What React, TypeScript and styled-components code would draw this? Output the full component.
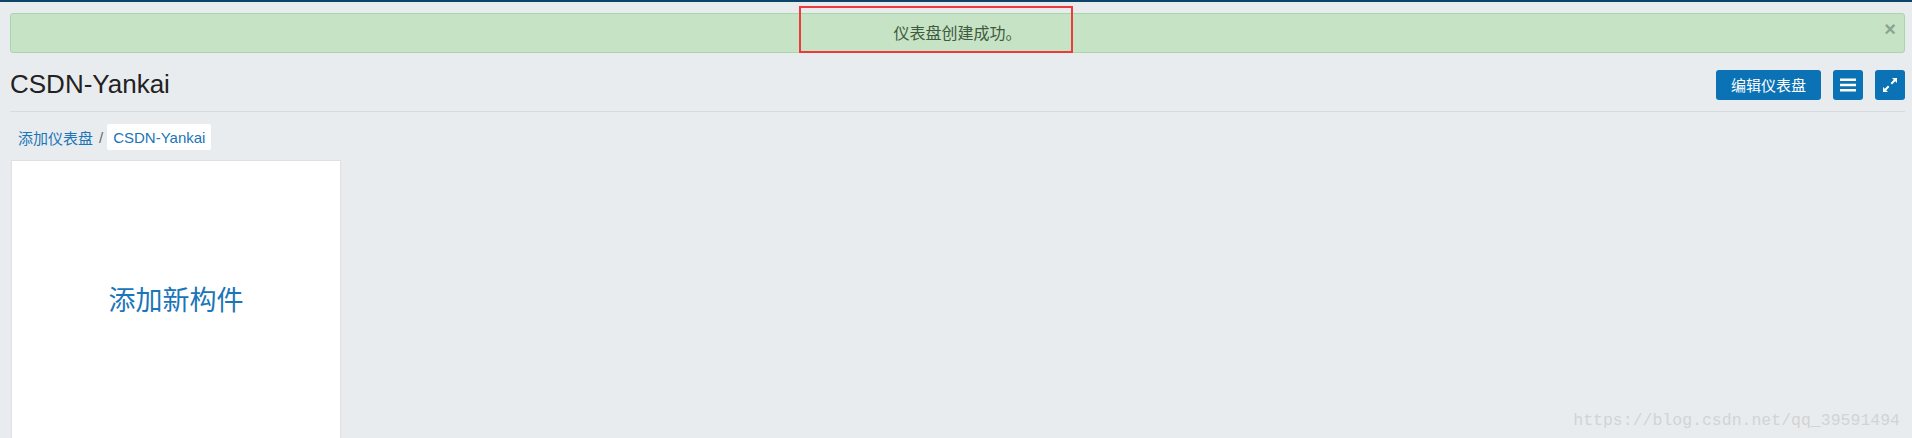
import styled, { createGlobalStyle } from "styled-components";

const Global = createGlobalStyle`
  html, body {
    margin: 0;
    padding: 0;
    background: #e9ecef;
    font-family: "Liberation Sans", "Noto Sans CJK SC", sans-serif;
  }
`;

const TopLine = styled.div`
  height: 2px;
  background: #0d4468;
`;

const Page = styled.div`
  position: relative;
  padding: 0 7px 0 10px;
  height: 436px;
  overflow: hidden;
`;

const Alert = styled.div`
  position: relative;
  margin-top: 11px;
  height: 40px;
  padding-bottom: 2px;
  box-sizing: border-box;
  border: 1px solid #a9d6a9;
  border-radius: 3px;
  background: #c6e3c6;
  display: flex;
  align-items: center;
  justify-content: center;
  color: #3f5a3c;
  font-size: 16px;
`;

const Highlight = styled.span`
  position: absolute;
  left: 788px;
  top: -8px;
  width: 270px;
  height: 43px;
  border: 2px solid #ee3a3a;
`;

const Close = styled.span`
  position: absolute;
  right: 8px;
  top: 4px;
  font-size: 20px;
  font-weight: bold;
  color: #8ea48e;
`;

const Header = styled.div`
  display: flex;
  align-items: center;
  justify-content: space-between;
  margin-top: 16px;
  padding-bottom: 11px;
  border-bottom: 1px solid #d6dbe0;
`;

const Title = styled.h1`
  margin: 0;
  font-size: 26px;
  font-weight: normal;
  color: #222;
`;

const Actions = styled.div`
  display: flex;
  gap: 12px;
`;

const Button = styled.button<{ $square?: boolean }>`
  height: 30px;
  width: ${(p) => (p.$square ? "30px" : "105px")};
  padding: 0;
  border: none;
  border-radius: 3px;
  background: #0b72b5;
  color: #fff;
  font-family: inherit;
  font-size: 15px;
  display: flex;
  align-items: center;
  justify-content: center;
`;

const Crumbs = styled.div`
  display: flex;
  align-items: center;
  margin-top: 12px;
  font-size: 15px;
  color: #1a75b9;
`;

const Crumb = styled.span<{ $active?: boolean }>`
  padding: ${(p) => (p.$active ? "0 6px" : "0 0 0 8px")};
  height: 26px;
  display: flex;
  align-items: center;
  background: ${(p) => (p.$active ? "#fff" : "transparent")};
  border-radius: 2px;
`;

const Sep = styled.span`
  color: #666;
  padding: 0 4px 0 6px;
`;

const Card = styled.div`
  margin-top: 10px;
  margin-left: 1px;
  width: 330px;
  height: 285px;
  background: #fff;
  border: 1px solid #dde1e5;
  display: flex;
  align-items: center;
  justify-content: center;
  color: #1a75b9;
  font-size: 27px;
  padding-bottom: 8px;
  box-sizing: border-box;
`;

const Watermark = styled.div`
  position: absolute;
  right: 12px;
  bottom: 8px;
  font-family: "Liberation Mono", monospace;
  font-size: 16.5px;
  color: #d2d3d4;
`;

const MenuIcon = () => (
  <svg width="16" height="14" viewBox="0 0 16 14">
    <rect x="0" y="0.5" width="16" height="2.5" fill="#fff" />
    <rect x="0" y="5.75" width="16" height="2.5" fill="#fff" />
    <rect x="0" y="11" width="16" height="2.5" fill="#fff" />
  </svg>
);

const ExpandIcon = () => (
  <svg width="16" height="16" viewBox="0 0 16 16">
    <path d="M10 1h5v5l-1.8-1.8-3.2 3.2-1.4-1.4 3.2-3.2z" fill="#fff" />
    <path d="M6 15H1v-5l1.8 1.8 3.2-3.2 1.4 1.4-3.2 3.2z" fill="#fff" />
  </svg>
);

const App = () => {
  return (
    <>
      <Global />
      <TopLine />
      <Page>
        <Alert>
          仪表盘创建成功。
          <Highlight />
          <Close>×</Close>
        </Alert>
        <Header>
          <Title>CSDN-Yankai</Title>
          <Actions>
            <Button>编辑仪表盘</Button>
            <Button $square>
              <MenuIcon />
            </Button>
            <Button $square>
              <ExpandIcon />
            </Button>
          </Actions>
        </Header>
        <Crumbs>
          <Crumb>添加仪表盘</Crumb>
          <Sep>/</Sep>
          <Crumb $active>CSDN-Yankai</Crumb>
        </Crumbs>
        <Card>添加新构件</Card>
        <Watermark>https://blog.csdn.net/qq_39591494</Watermark>
      </Page>
    </>
  );
};

export default App;
